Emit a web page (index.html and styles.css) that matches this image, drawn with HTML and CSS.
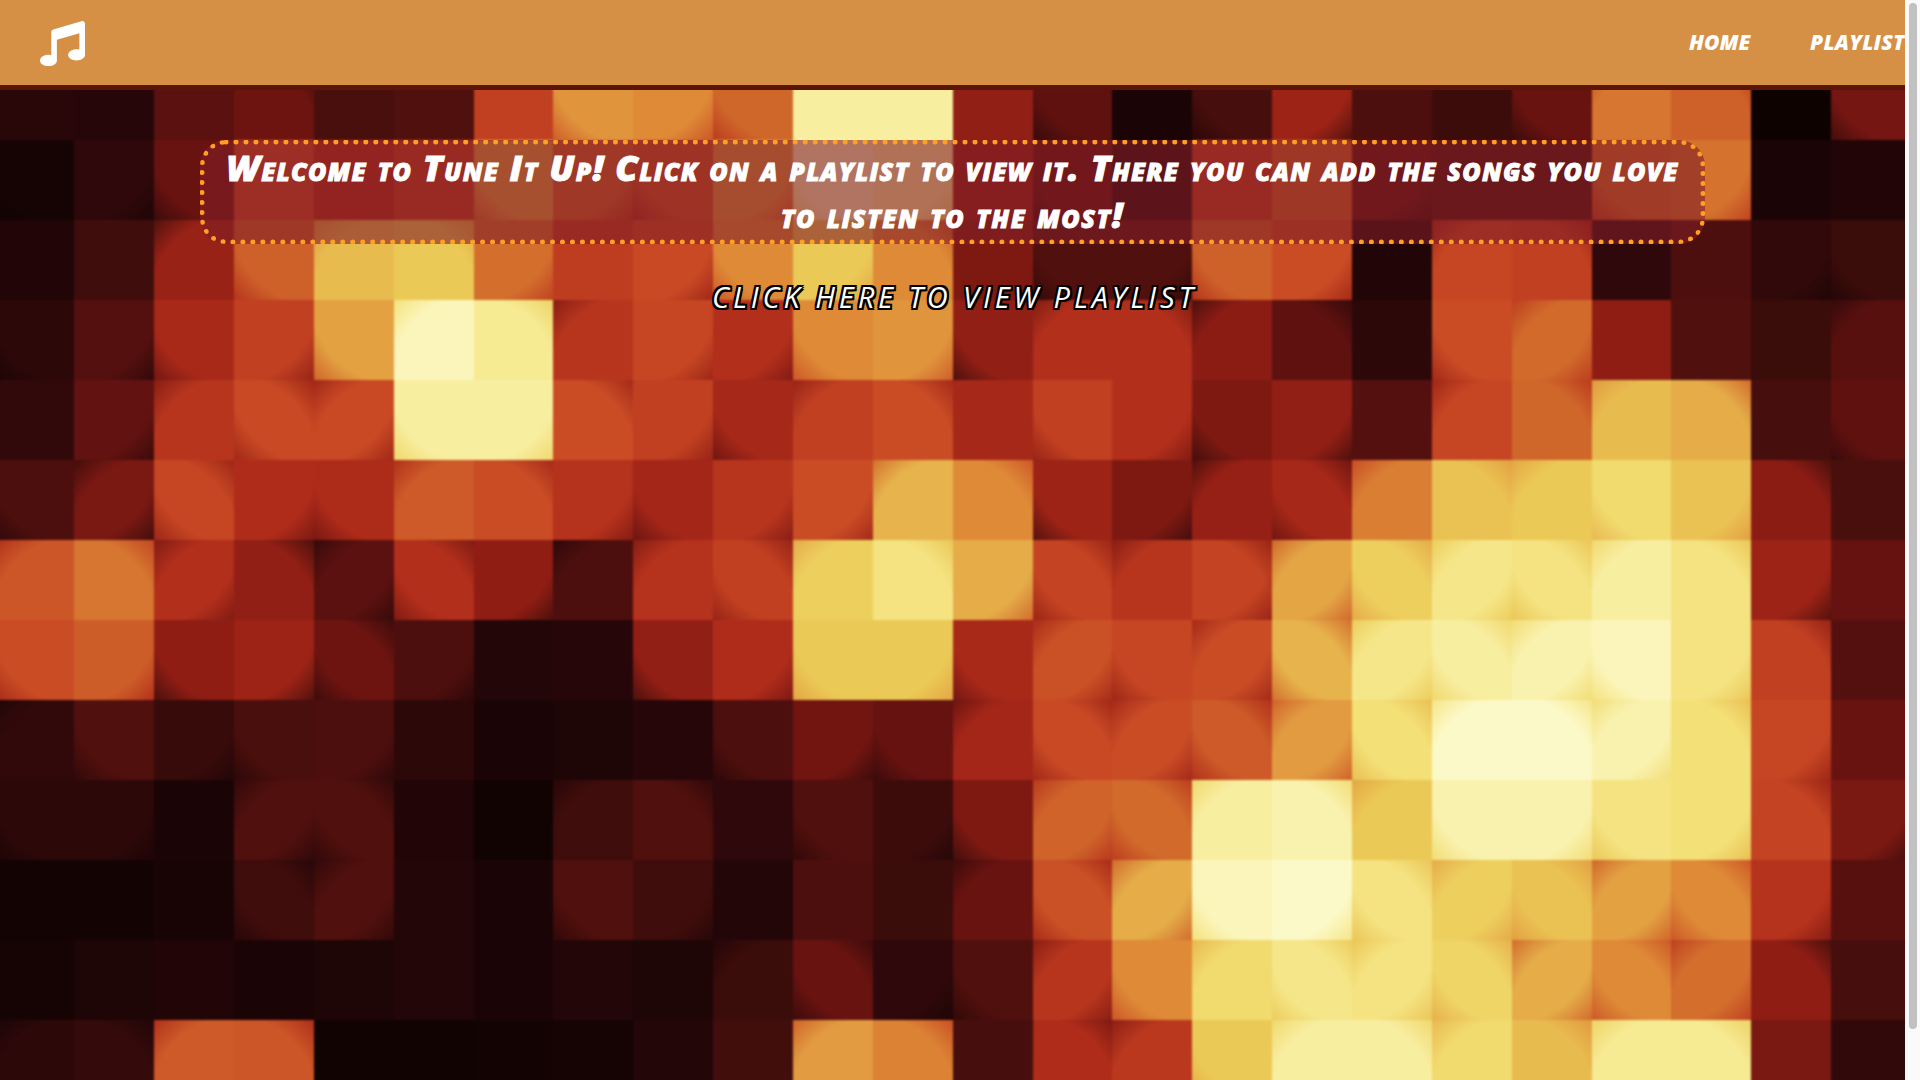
FILE: index.html
```
<!DOCTYPE html>
<html lang="en">
<head>
<meta charset="utf-8">
<title>Tune It Up</title>
<link rel="stylesheet" href="styles.css">
</head>
<body>
<div class="page">
  <header class="topbar">
    <svg class="logo" viewBox="0 0 512 512" aria-label="Tune It Up"><path fill="#fff" d="M470.38 1.51L150.41 96A32 32 0 0 0 128 126.51v261.41A139 139 0 0 0 96 384c-53 0-96 28.66-96 64s43 64 96 64 96-28.66 96-64V214.32l256-75v184.61a138.4 138.4 0 0 0-32-3.93c-53 0-96 28.66-96 64s43 64 96 64 96-28.65 96-64V32a32 32 0 0 0-41.62-30.49z"/></svg>
    <nav class="nav"><a class="nav-home">HOME</a><a class="nav-playlist">PLAYLIST</a></nav>
  </header>
  <main class="stage">
    <div class="lights" id="lights"></div>
    <div class="content">
      <h1 class="welcome"><span class="line-one">Welcome to Tune It Up! Click on a playlist to view it. There you can add the songs you love</span> <span class="line-two">to listen to the most!</span></h1>
      <a class="view-link">CLICK HERE TO VIEW PLAYLIST</a>
    </div>
  </main>
</div>
<div class="scrollbar"><div class="thumb"></div></div>
<script src="lights.js"></script>
</body>
</html>
```
FILE: styles.css
```
* { box-sizing: border-box; }
body {
  margin: 0;
  height: 1080px;
  display: flex;
  overflow: hidden;
  font-family: "Open Sans", sans-serif;
  color: #fff;
}
.page {
  flex: 1;
  min-width: 0;
  display: flex;
  flex-direction: column;
  overflow: hidden;
}
.topbar {
  height: 90px;
  flex: none;
  display: flex;
  justify-content: space-between;
  align-items: flex-start;
  background: #d69045;
  border-bottom: 5px solid #5c1509;
}
.logo { width: 45px; height: 45px; margin: 21px 0 0 40px; flex: none; }
.nav {
  display: flex;
  gap: 60px;
  padding-top: 28px;
  font-size: 21px;
  line-height: 29px;
  font-weight: 800;
  font-style: italic;
  white-space: nowrap;
}
.nav-home { width: 61px; }
.nav-playlist { width: 95px; letter-spacing: 0.3px; }
.stage {
  flex: 1;
  display: grid;
  overflow: hidden;
  background: #2a0806;
}
.lights, .content { grid-area: 1 / 1; min-width: 0; }
/* The outer tracks bleed 4px past the stage so the softened edge stays out of view. */
.lights {
  display: grid;
  margin: -4px;
  grid-template-columns: 78.3px repeat(22, 79.86px) 77.8px;
  grid-template-rows: 54px repeat(11, 80px) 64px;
  filter: blur(0.9px);
}
.cell {
  background-color: var(--c);
  background-image:
    radial-gradient(circle at 100% 100%, transparent 83px, var(--tl) 117px),
    radial-gradient(circle at 0 100%, transparent 83px, var(--tr) 117px),
    radial-gradient(circle at 0 0, transparent 83px, var(--br) 117px),
    radial-gradient(circle at 100% 0, transparent 83px, var(--bl) 117px);
}
.cell:nth-child(-n+24) { background-size: 100% 80px; background-position: bottom; }
.cell:nth-child(n+289) { background-size: 100% 80px; background-position: top; }
.content {
  position: relative;
  display: flex;
  flex-direction: column;
  align-items: center;
  padding-top: 50px;
}
.welcome {
  width: 1505px;
  margin: 0;
  height: 104px;
  display: flex;
  flex-direction: column;
  align-items: center;
  border: 5px dotted #ff9f24;
  border-radius: 26px;
  background: rgba(128, 30, 38, 0.6);
  font-size: 36px;
  line-height: 46.5px;
  font-weight: 800;
  font-style: italic;
  font-variant: small-caps;
  white-space: nowrap;
  -webkit-text-stroke: 0.9px #fff;
}
.line-one { letter-spacing: 1.25px; }
.line-two { letter-spacing: 1.5px; }
.view-link {
  margin-top: 31px;
  padding-left: 4px;
  font-size: 29px;
  line-height: 44px;
  font-style: italic;
  letter-spacing: 3.9px;
  white-space: nowrap;
  text-shadow: -2px 0 #000, 2px 0 #000, 0 -2px #000, 0 2px #000, 2px 2px #000, -2px 2px #000, 2px -2px #000, -2px -2px #000;
}
.scrollbar {
  width: 15px;
  flex: none;
  padding: 3px 3px 0 4px;
  background: #fafafa;
}
.thumb { height: 1026px; border-radius: 4px; background: #c1c1c1; }
```
FILE: lights.js
```
// Each entry: two-digit brightness, then a hex mask of shaded corners (1 TL, 2 TR, 4 BR, 8 BL).
const rows = [
  "110 100 270 322 220 240 570 808 784 698 960 960 410 288 060 218 444 230 180 318 731 672 010 348",
  "048 134 318 590 490 560 818 674 628 804 988 964 400 288 100 550 660 264 220 220 698 724 060 080",
  "080 190 431 678 861 882 714 560 604 788 884 782 360 248 244 678 614 080 591 572 130 230 144 178",
  "128 254 488 574 828 981 952 531 594 514 788 804 418 511 512 391 282 120 618 705 400 240 170 261",
  "140 294 531 60a 605 968 964 612 574 478 571 612 470 578 514 368 414 250 591 692 861 842 210 288",
  "238 355 59a 504 498 651 612 524 468 534 614 851 782 448 364 421 47a 751 872 881 918 874 392 220",
  "641 732 515 412 275 51a 404 231 521 57a 891 932 844 58a 531 586 835 89a 945 93a 961 932 444 300",
  "618 664 408 444 32a 234 090 100 418 504 888 884 488 625 598 615 85a 945 96a 975 988 934 572 250",
  "141 248 164 228 234 120 060 070 100 238 334 308 461 60a 615 65a 815 92a 991 992 975 922 594 310",
  "128 124 060 245 24a 080 020 191 242 130 248 184 368 685 70a 961 972 881 978 974 938 924 582 354",
  "030 030 050 19a 245 090 060 248 194 090 230 170 311 62a 845 988 994 93a 895 87a 825 78a 524 260",
  "040 070 080 060 070 090 060 090 070 171 31a 134 248 535 788 911 94a 935 90a 845 78a 715 402 210",
  "121 152 651 642 020 020 030 040 090 200 811 762 210 502 541 888 961 962 911 862 951 952 350 140"
];

const ramp = [
  [0, 11, 2, 0], [10, 38, 6, 9], [20, 66, 14, 11], [30, 101, 18, 16], [40, 143, 29, 20],
  [50, 176, 44, 26], [60, 200, 73, 36], [70, 209, 106, 43], [78, 222, 138, 55],
  [84, 229, 172, 72], [88, 235, 201, 86], [92, 243, 224, 118], [95, 246, 234, 147], [99, 252, 249, 200]
];

function tone(v) {
  let i = 1;
  while (i < ramp.length - 1 && ramp[i][0] < v) i++;
  const a = ramp[i - 1], b = ramp[i], t = (v - a[0]) / (b[0] - a[0]);
  return "rgb(" + [1, 2, 3].map(k => Math.round(a[k] + (b[k] - a[k]) * t)).join(",") + ")";
}

const lights = document.getElementById("lights");
rows.forEach(row => row.split(" ").forEach(entry => {
  const v = parseInt(entry.slice(0, 2), 10);
  const mask = parseInt(entry[2], 16);
  const dark = tone(v > 85 ? v - 6 : v > 45 ? v - 16 : v * 0.5);
  const cell = document.createElement("div");
  cell.className = "cell";
  cell.style.setProperty("--c", tone(v));
  ["tl", "tr", "br", "bl"].forEach((name, k) => {
    cell.style.setProperty("--" + name, mask & (1 << k) ? dark : "transparent");
  });
  lights.appendChild(cell);
}));
```
